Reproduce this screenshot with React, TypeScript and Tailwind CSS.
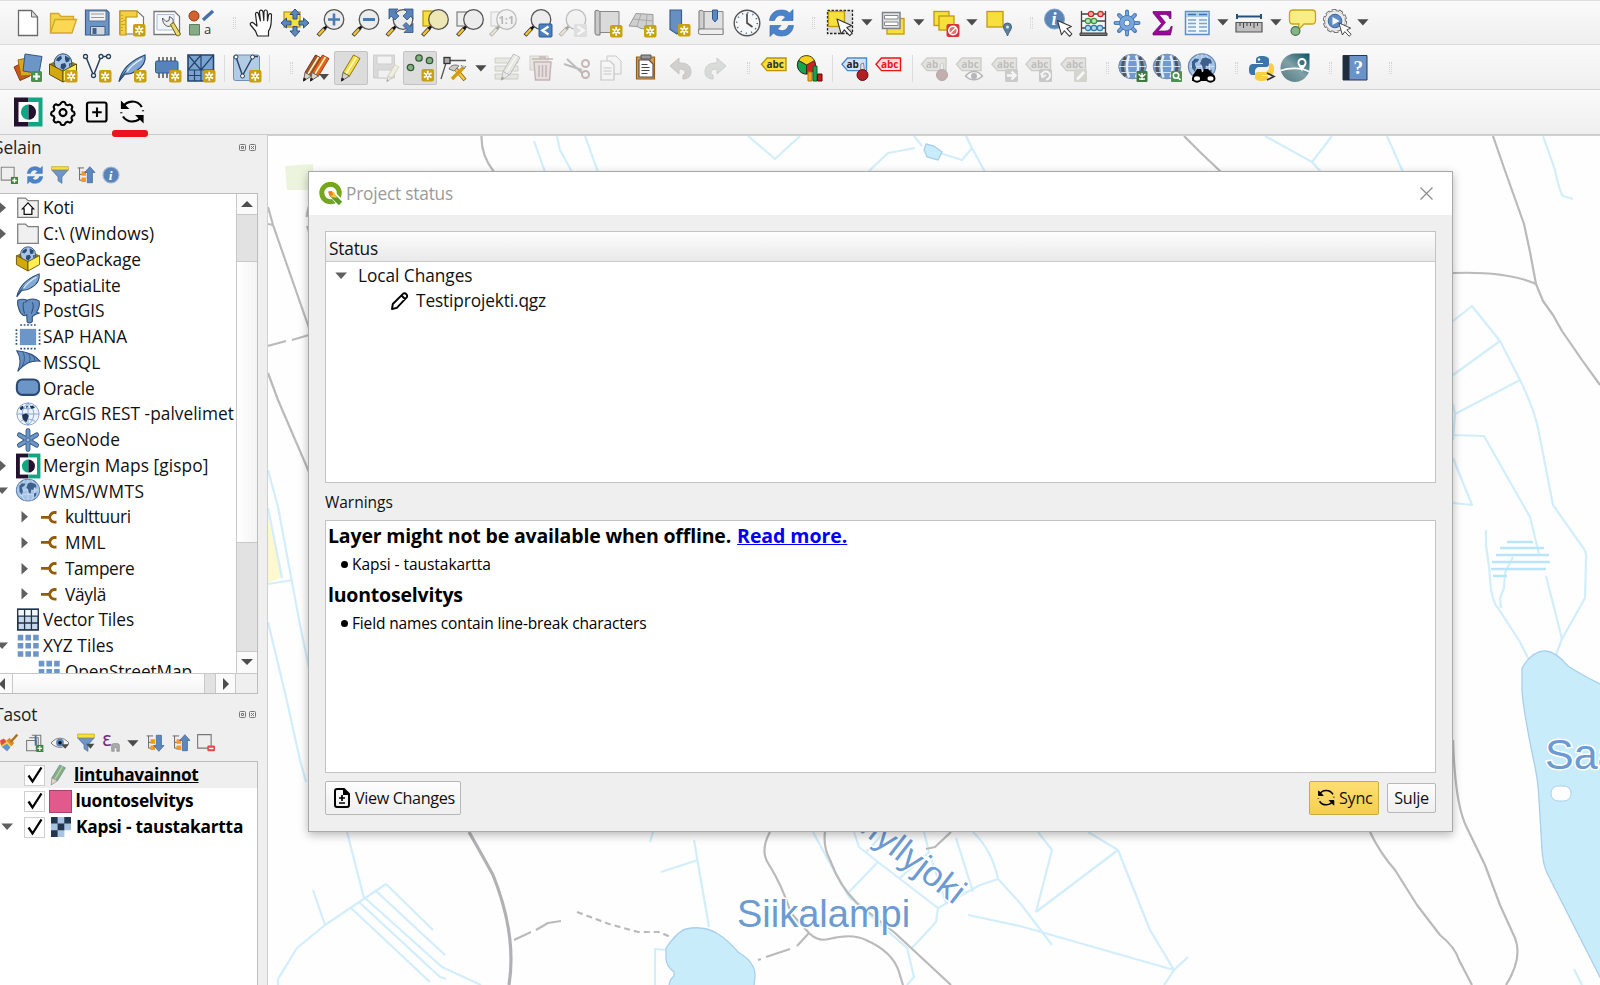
import type { ReactNode } from "react";

/* ---------- shared icon parts (28 x 28 grid) ---------- */

function Ico({ children, s = 28, faded = false }: { children: ReactNode; s?: number; faded?: boolean }) {
  return (
    <svg width={s} height={s} viewBox="0 0 28 28" fill="none" overflow="visible" className={faded ? "shrink-0 opacity-35 grayscale-[60%]" : "shrink-0"}>
      {children}
    </svg>
  );
}

const Star = ({ x = 16, y = 16 }: { x?: number; y?: number }) => (
  <g transform={`translate(${x} ${y})`}>
    <rect width="12.5" height="12.5" rx="2" fill="#c8a20c" />
    <path d="M6.25 1.8v8.9M2.4 4l7.7 4.5M10.1 4L2.4 8.5" stroke="#fff" strokeWidth="1.8" />
    <circle cx="6.25" cy="6.25" r="1" fill="#c8a20c" />
  </g>
);

const Lens = ({ cx = 18, fill = "#ececec" }: { cx?: number; fill?: string }) => (
  <g>
    <path d={`M${cx - 16} 26.5L${cx - 9} 19`} stroke="#3b3b3b" strokeWidth="4" />
    <path d={`M${cx - 15.4} 25.9L${cx - 9.4} 19.5`} stroke="#f4c331" strokeWidth="2.4" />
    <path d={`M${cx - 10} 20L${cx - 6} 16.2`} stroke="#111" strokeWidth="2.6" />
    <circle cx={cx} cy="10.5" r="9.8" fill={fill} stroke="#555" strokeWidth="1.3" />
  </g>
);

const Cursor = ({ x, y, k = 1 }: { x: number; y: number; k?: number }) => (
  <path transform={`translate(${x} ${y}) scale(${k})`} d="M0 0l4.2 15 3.1-4.2 5.4 5.8 2.5-2.4-5.4-5.6 4.8-2.2z" fill="#fff" stroke="#333" strokeWidth="1.1" strokeLinejoin="round" />
);

const ArrowDown = () => (
  <svg width="12" height="7" viewBox="0 0 12 7" className="shrink-0">
    <path d="M0.3 0.3h11.2L5.9 6.6z" fill="#4b4b4b" />
  </svg>
);

const Box = ({ x, y, w, h, f = "#f7df3c", st = "#c09a10" }: { x: number; y: number; w: number; h: number; f?: string; st?: string }) => (
  <rect x={x} y={y} width={w} height={h} fill={f} stroke={st} strokeWidth="1.3" />
);

const Globe = ({ cy = 13 }: { cy?: number }) => (
  <g transform={`translate(14 ${cy})`}>
    <ellipse rx="13.6" ry="12.6" fill="#a5c3e6" stroke="#6487b3" strokeWidth="1.2" />
    <path d="M-12 0H12M0-12V12M-10-7C-4-4 4-4 10-7M-10 7C-4 4 4 4 10 7M-4-12C-9-4-9 4-4 12M4-12C9-4 9 4 4 12" stroke="#d5e4f4" strokeWidth="0.8" />
    <path d="M-10-5l3-3 4 .5-1 2.500-3 1.500 0 2 1 2-1 5-3-4zM0-8l4-1 5 2 1 4-3 0-1 3-2-1-1 5-2-1-1-4-2-2zM7 4l3-1-1 4-2 1z" fill="#3d5f8c" />
  </g>
);

const StripedGlobe = () => (
  <g>
    <ellipse cx="14" cy="12.5" rx="13.8" ry="12.3" fill="#6f9bd1" stroke="#7d8da3" />
    <path d="M7 3C3 9 3 17 7 22M21 3c4 6 4 14 0 19" stroke="#555" strokeWidth="3" />
    <path d="M10.500 1.500C8 8 8 17 10.500 23.500M17.500 1.500C20 8 20 17 17.500 23.500" stroke="#e7eef7" strokeWidth="2.400" />
    <path d="M0.5 12.5h27M3 6.500h22M3 18.500h22" stroke="#dce8f5" strokeWidth="0.900" />
  </g>
);

const Refresh = () => (
  <g fill="#4a83c8" stroke="#2d62a5" strokeWidth="0.6">
    <path d="M2 11.500C3 4 8 1 14 1c4 0 6 1 8 3l3.500-3.500v11H14.500L18 8c-4-3-9-2-11 3.500z" />
    <path d="M26 16.500C25 24 20 27 14 27c-4 0-6-1-8-3l-3.500 3.500v-11h11L10 20c4 3 9 2 11-3.500z" />
  </g>
);

const Tag = ({ text, f, st, c, y = 3 }: { text: string; f: string; st: string; c: string; y?: number }) => (
  <g>
    <path d={`M2 ${y + 6.300}L7.500 ${y}H26.500V${y + 12.600}H7.500z`} fill={f} stroke={st} strokeWidth="1.400" />
    <text x={text === "ab" ? 6.500 : 7} y={y + 10} fontFamily="Open Sans, sans-serif" fontWeight="700" fontSize="10" fill={c}>
      {text}
    </text>
  </g>
);

const Feather = () => (
  <g>
    <path d="M1 27.500C3 18 9 8 27 1c1 7-2 12-9 16-3 2-7 3.500-11 3z" fill="#83aad6" stroke="#26476f" strokeWidth="1.200" />
    <path d="M1 27.500C5 19 13 10 24 4" stroke="#26476f" />
    <path d="M9 17.500C13 11 18 8 24 4.500" stroke="#dbe8f6" strokeWidth="1.600" />
  </g>
);

const GeoPkg = () => (
  <g>
    <path d="M0.500 10L14 3l13.500 7L14 18z" fill="#8f7612" />
    <circle cx="14" cy="8.500" r="8.700" fill="#a9c6e6" stroke="#2e4d76" />
    <path d="M8 4l4-2.500 1 3-3 3-3-1zM16 1.500l5 3-1 3-3 1-1-3zM12 10l4-1 1.500 3-3 4-3-2zM20 9.500l2-.5-2 5z" fill="#2b4c76" />
    <path d="M0.500 10L14 17v11L0.500 20.500z" fill="#d2a90a" stroke="#5d4b06" />
    <path d="M27.500 10L14 17v11l13.500-7.500z" fill="#fff04f" stroke="#5d4b06" />
  </g>
);

const MerginLogo = () => (
  <g>
    <path d="M0-.5h14.500v29H0z" fill="#23112f" />
    <path d="M14.500-.5h14v29h-14z" fill="#11a683" />
    <path d="M4.500 4h20v20h-20z" fill="#fff" />
    <path d="M14.500 6.500a7.600 7.600 0 000 15.200z" fill="#11a683" />
    <path d="M14.500 6.500a7.600 7.600 0 010 15.200z" fill="#23112f" />
  </g>
);

const Pencil = ({ f = "#f2dc4a", st = "#8c7a12" }: { f?: string; st?: string }) => (
  <g strokeLinejoin="round">
    <path d="M6 18.500L16.500 1l6.500 3.500-10.500 17.500z" fill={f} stroke={st} />
    <path d="M9 20L19.500 3" stroke="#fff8b8" strokeWidth="1.600" />
    <path d="M6 18.500L4.500 27l8-5z" fill="#d9d3c3" stroke="#666" />
    <path d="M4.500 27l.5-3 2 1.300z" fill="#222" stroke="#222" />
  </g>
);

const Bars = ({ children }: { children?: ReactNode }) => (
  <g>
    <path d="M2 4h23v5H2zM2 12h23v5H2zM2 20h23v5H2z" fill="#d2d2a8" stroke="#8a8a6a" />
    {children}
  </g>
);

const SyncMark = () => (
  <g stroke="#000" strokeWidth="2.200" fill="none">
    <path d="M4.500 9.500A11 11 0 0123.800 9M24 17.500A11 11 0 015 18.500" />
    <path d="M3.500 4v6.500h6.500zM25 24v-6.500h-6.500z" fill="#000" strokeWidth="1.200" />
    <path d="M3.300 14.200v1M25 12.200v1" />
  </g>
);

/* ---------- main toolbars ---------- */

const row1a: ReactNode[] = [
  <Ico><path d="M4.500 1.500h13l6 6.500v18.500h-19z" fill="#fff" stroke="#6b6b6b" strokeWidth="1.300" /><path d="M17.500 1.500V8h6z" fill="#ddd" stroke="#6b6b6b" /></Ico>,
  <Ico><path d="M1.500 24V4.500h8l2.500 3h12.500V11" fill="#f5d34b" stroke="#d3a62c" strokeWidth="1.300" /><path d="M1.500 24L6 10.500h21.500L23 24z" fill="#fbd854" stroke="#d3a62c" strokeWidth="1.300" /></Ico>,
  <Ico><path d="M2.500 1h21l2.500 2.500V26H2.500z" fill="#6c94c4" stroke="#40618c" strokeWidth="1.200" /><path d="M6 2h17v10H6z" fill="#f1f1f1" stroke="#57779f" /><path d="M8 5h13M8 8.500h13" stroke="#999" strokeWidth="1.200" /><path d="M7.500 17.500H22V26H7.500z" fill="#d3d8de" stroke="#40618c" /><path d="M9.500 19h4v6h-4z" fill="#40618c" /></Ico>,
  <Ico><path d="M2 2h17l6.500 6v17H2z" fill="#fff" stroke="#777" strokeWidth="1.200" /><path d="M2 2h17v6H8v18H2z" fill="#f4cf43" stroke="#c19611" strokeWidth="1.200" /><path d="M4 6v17M6 11v1M6 15v1" stroke="#a37c00" strokeDasharray="1 2" /><Star x={15} y={15} /></Ico>,
  <Ico><path d="M1 2.500h20.500l5 5v18H1z" fill="#fff" stroke="#777" strokeWidth="1.300" /><path d="M4 5.500h17V21H4z" fill="#f3f6fb" stroke="#a9bcd6" /><path d="M9.500 9l3.500 3.500 3-1 .5-4 3 2c1.500 3 .5 6-2 7.500-3.500 1.500-8-1.500-8-8z" fill="#eee" stroke="#555" /><path d="M17.500 15.500l3-2 7 11.500c-1 2-2.500 2-4 1.500z" fill="#ead96c" stroke="#6b5b10" /></Ico>,
  <Ico><circle cx="7" cy="7" r="5" fill="#d2622f" stroke="#8f3c14" /><path d="M16 11L26 2" stroke="#4670a6" strokeWidth="3.400" /><path d="M2.500 15.500h10V26h-10z" fill="#86ab86" stroke="#5a7f5c" /><text x="17" y="25" fontFamily="Open Sans, sans-serif" fontSize="13" fill="#333">a</text></Ico>,
];

const row1b: ReactNode[] = [
  <Ico><g transform="translate(1.500 0)"><path d="M9 27l-2-5-5-6c-1-2 1.500-3.500 3-2l3.500 3L7 5c0-2 2.500-2.500 3 0l2 7-1-9c0-2.500 3-2.500 3.500 0l.8 8.500L15.500 2.500c.5-2 3-2 3.300 0L19 12l1-6c.5-2 3-1.700 3 0-.5 7 .5 12-3 16v5z" fill="#fff" stroke="#222" strokeWidth="1.200" strokeLinejoin="round" /></g></Ico>,
  <Ico><Box x={3} y={3} w={16} h={15} /><path d="M14 0l5 5.500h-3v4.500h-4V5.500H9zM14 27.500L9 22h3v-4.500h4V22h3zM0 14l5.500-5v3H10v4H5.500v3zM28 14l-5.500-5v3H18v4h4.500v3z" fill="#5d88be" stroke="#2e527f" /></Ico>,
  <Ico><Lens /><path d="M18 4.500v12M12 10.500h12" stroke="#4b7ab5" strokeWidth="2.600" /></Ico>,
  <Ico><Lens /><path d="M12 10.500h12" stroke="#4b7ab5" strokeWidth="3" /></Ico>,
  <Ico><Lens /><path d="M4 0h9l-3 3 4 4-4 4-4-4-2 3zM28 0h-9l3 3-4 4 4 4 4-4 2 3zM28 23.500h-9l3-3-4-4 3-3 4 4 3-3z" fill="#5883b9" stroke="#2e527f" strokeWidth=".8" /></Ico>,
  <Ico><Box x={3} y={2} w={14} h={15} /><Lens cx={18.500} fill="#efe6b5" /></Ico>,
  <Ico><Box x={2} y={3} w={14} h={14} f="#eee" st="#888" /><Lens cx={18.500} /></Ico>,
  <Ico faded><Box x={2} y={3} w={14} h={14} f="#eee" st="#999" /><Lens cx={17.500} /><text x="9.500" y="14.500" fontFamily="Open Sans, sans-serif" fontWeight="700" fontSize="11" fill="#444">1:1</text></Ico>,
  <Ico><Lens cx={17} /><rect x="15" y="15" width="13" height="13" rx="1" fill="#4b7fbd" stroke="#2f5b91" /><path d="M24.500 17.500l-6 4 6 4" stroke="#fff" strokeWidth="2.400" /></Ico>,
  <Ico faded><Lens cx={17} /><rect x="15" y="15" width="13" height="13" rx="1" fill="#bbb" /><path d="M18.500 17.500l6 4-6 4" stroke="#fff" strokeWidth="2.400" /></Ico>,
  <Ico><g transform="translate(1 0)"><path d="M5 2.500h20v21H5z" fill="#dadada" stroke="#888" /><path d="M1 2c3-1.500 5 0 5 2v22H3c-2 0-2-2-2-3z" fill="#c9c9c9" stroke="#777" /><Star /></g></Ico>,
  <Ico><path d="M1 17L8 4.500l17 1v15l-12-1-4-2z" fill="#cfcfcf" stroke="#999" /><path d="M5 10l20 2M13 5l-4 12M19 5l-1 14" stroke="#aaa" /><Star /></Ico>,
  <Ico><g transform="translate(2 0)"><path d="M5 1h11.500v20l-4.500 4L5 20.500z" fill="#6690c2" stroke="#3b5f8f" strokeWidth="1.200" /><Star x={13} y={15} /></g></Ico>,
  <Ico><path d="M6 2.500h20v23H3" fill="#e0e0e0" stroke="#888" /><path d="M2 2c3-1.500 5 0 5 2v16H3c-2 0-2 2-1 5z" fill="#cfcfcf" stroke="#777" /><path d="M3 20h23v5.500H3c-2-1-2-4.500 0-5.500z" fill="#eee" stroke="#888" /><path d="M15.500 1h5v9l-2.500 3-2.500-3z" fill="#5d88be" stroke="#34588a" /></Ico>,
  <Ico><g transform="translate(1 0)"><circle cx="14" cy="14" r="12.800" fill="#f6f8fa" stroke="#555" strokeWidth="1.400" /><circle cx="14" cy="14" r="10.300" stroke="#4a6f9e" strokeWidth="1.600" strokeDasharray="1.200 4.190" /><path d="M14 4.500V14l5.500 4" stroke="#444" strokeWidth="1.600" /></g></Ico>,
  <Ico><g transform="translate(1.500 0)"><Refresh /></g></Ico>,
];

type Item = { icon: ReactNode; arrow?: boolean; pressed?: boolean };

const row1c: Item[] = [
  { icon: <Ico><path d="M1.500 1.500h25v23h-25z" fill="#ddd" stroke="#222" strokeDasharray="2.500 1.500" strokeWidth="1.300" /><Box x={2.500} y={2.500} w={16} h={15} /><Cursor x={11} y={10} /></Ico>, arrow: true },
  { icon: <Ico><Box x={8} y={9.500} w={17} h={15.500} /><path d="M3.500 3.500h17.500v16H3.500z" fill="#e1e3e6" stroke="#7d838a" strokeWidth="1.500" /><path d="M5.500 6.500h13.500v3.500H5.500zM5.500 13h13.500v3.500H5.500z" fill="#fff" stroke="#888" /></Ico>, arrow: true },
  { icon: <Ico><Box x={2} y={2.500} w={15} h={14} /><Box x={7} y={7} w={15} h={14} /><rect x="14.500" y="15" width="13" height="13" rx="2" fill="#d8343b" /><circle cx="21" cy="21.500" r="4.300" fill="#e96b6b" stroke="#fff" strokeWidth="1.500" /><path d="M18 24.500l6-6" stroke="#fff" strokeWidth="1.500" /></Ico>, arrow: true },
  { icon: <Ico><g transform="translate(1 0)"><Box x={2} y={2.500} w={16} h={15.500} /><path d="M22.500 27c-1-4-4-6-4-9a4 4 0 018 0c0 3-3 5-4 9z" fill="#5e7f9c" stroke="#43627e" /><circle cx="22.500" cy="18" r="1.500" fill="#dfe8f0" /></g></Ico> },
];

const row1d: Item[] = [
  { icon: <Ico><circle cx="10.500" cy="10" r="10" fill="#5a83b8" stroke="#86a3c8" /><text x="7.500" y="16" fontFamily="Liberation Serif, serif" fontStyle="italic" fontWeight="700" fontSize="18" fill="#fff">i</text><Cursor x={13.500} y={11.500} k={0.950} /></Ico> },
  { icon: <Ico><path d="M2.500 2v22M26.500 2v22M2.500 5h24M2.500 12h24M2.500 19h24" stroke="#444" strokeWidth="1.300" /><g strokeWidth="1.200"><g fill="#f6a7a7" stroke="#c22"><circle cx="12" cy="5" r="2.700" /><circle cx="21.500" cy="5" r="2.700" /></g><g fill="#b6e3b0" stroke="#3b9440"><circle cx="9" cy="12" r="2.700" /><circle cx="15" cy="12" r="2.700" /></g><g fill="#b4d6ee" stroke="#2f7caa"><circle cx="9" cy="19" r="2.700" /><circle cx="15" cy="19" r="2.700" /><circle cx="21" cy="19" r="2.700" /></g></g><path d="M1 24h27v2.500H1z" fill="#777" stroke="#444" /></Ico> },
  { icon: <Ico><g stroke="#4a7cba" strokeWidth="4" strokeLinecap="round"><path d="M14 2.500v23M2.500 14h23M6 6l16 16M22 6L6 22" /></g><g stroke="#7aa6dc" strokeWidth="2.200" strokeLinecap="round"><path d="M14 3v22M3 14h22M6.500 6.500l15 15M21.500 6.500l-15 15" /></g><circle cx="14" cy="14" r="7.500" fill="#7aa6dc" stroke="#4a7cba" /><circle cx="14" cy="14" r="3" fill="#f5f5f5" stroke="#4a7cba" /></Ico> },
  { icon: <Ico><path d="M5 2.500h18v7h-1.500c-.5-3-2-4-5-4h-5.500l6.500 8-7.500 8.500h7c3.500 0 5-1.500 6-4.500h1.300l-1.800 8.500H5v-2l8.500-9.500L5 4z" fill="#a0009e" stroke="#5d1060" strokeWidth=".7" /></Ico> },
  { icon: <Ico><path d="M2.500 2.500h23.500v23H2.500z" fill="#eef5fb" stroke="#5e8ec4" strokeWidth="1.500" /><path d="M3 3h22.500v5H3z" fill="#aecbeb" /><path d="M5 5.500h8M16 5.500h8" stroke="#3f72b0" strokeWidth="1.500" /><path d="M5 11h8M16 11h8M5 14.500h8M16 14.500h8M5 18h8M16 18h8M5 22h8M16 22h8" stroke="#7ea3cb" strokeWidth="1.400" /></Ico>, arrow: true },
  { icon: <Ico><path d="M2 7.500h24M2 5v5M26 5v5" stroke="#28507c" strokeWidth="2" /><path d="M1 13.500h26v9.500H1z" fill="#bfbfbf" stroke="#555" strokeWidth="1.200" /><path d="M5 14v3M8.500 14v5M12 14v3M15.500 14v3M19 14v5M22.500 14v3" stroke="#444" /></Ico>, arrow: true },
  { icon: <Ico><path d="M5 1h19c2.500 0 3.500 1.500 3.500 3.500v7c0 2.500-1.500 3.500-3.500 3.500h-8l-6 6 1-6H5c-2.500 0-3.500-1-3.500-3.500v-7C1.500 2 3 1 5 1z" fill="#f9ee86" stroke="#c7a616" strokeWidth="1.300" /><circle cx="7.500" cy="22" r="4.400" fill="#86b586" stroke="#4d6e4d" strokeWidth="1.200" /></Ico> },
  { icon: <Ico><circle cx="12" cy="12" r="10.600" stroke="#555" strokeWidth="3" strokeDasharray="4.300 2.360" /><circle cx="12" cy="12" r="10.500" fill="#ededed" stroke="#666" strokeWidth=".9" /><circle cx="12" cy="12" r="10.600" stroke="#ededed" strokeWidth="1.400" strokeDasharray="3.300 3.360" strokeDashoffset="-0.500" /><circle cx="12" cy="12" r="6.800" fill="#5e8bc2" stroke="#3c6496" /><path d="M9.500 8l7 4-7 4z" fill="#fff" /><Cursor x={16} y={14} k={0.800} /></Ico>, arrow: true },
];

const row2a: ReactNode[] = [
  <Ico><path d="M0 13l10-5 6 14-10 4.500z" fill="#c4571c" stroke="#863a10" /><path d="M4 6l13-3 2 18-12 1z" fill="#dba621" stroke="#97700b" /><path d="M11 0l17 2.500-3 17L9 17z" fill="#6c96c8" stroke="#335781" /><rect x="17" y="17" width="11" height="11" rx="1.500" fill="#4b9150" /><path d="M22.500 19v7M19 22.500h7" stroke="#fff" strokeWidth="2.200" /></Ico>,
  <Ico><GeoPkg /><Star /></Ico>,
  <Ico><path d="M3 3l7.500 18.500L18 2.500h7" stroke="#28415e" strokeWidth="1.500" /><g fill="#fff" stroke="#28415e" strokeWidth="1.300"><circle cx="2.500" cy="2.500" r="2" /><circle cx="10.500" cy="21.500" r="2" /><circle cx="18" cy="2.500" r="2" /><circle cx="25.500" cy="2.500" r="2" /></g><Star /></Ico>,
  <Ico><Feather /><Star /></Ico>,
  <Ico><path d="M6 3v21M10 3v21M14 3v21M18 3v21M22 3v21" stroke="#444" strokeWidth="1.400" /><rect x="2.500" y="7" width="22.500" height="12" rx="1.500" fill="#5683bb" stroke="#345b8d" /><Star /></Ico>,
  <Ico><path d="M1 1h25.500v26H1z" fill="#7ba3d1" stroke="#24446c" strokeWidth="1.600" /><path d="M14 1v26M1 16h25.500M1 1l13 15M14 1L1 16M26.500 1L14 16M7.500 16v11M1 21.500h13" stroke="#24446c" strokeWidth="1.200" /><Star /></Ico>,
];
const row2b: ReactNode[] = [
  <Ico><rect x=".5" y="1" width="26" height="25.500" rx="2" fill="#b3cce6" stroke="#6d8eb5" /><path d="M3 3l6.500 18.500L20 2.500h5" stroke="#28415e" strokeWidth="1.400" /><g fill="#fff" stroke="#28415e"><circle cx="3" cy="3" r="2" /><circle cx="9.500" cy="22" r="2" /><circle cx="19.500" cy="3" r="2" /></g><Star /></Ico>,
];
const row2c: Item[] = [
  { icon: <Ico><g transform="translate(-3 0)"><Pencil f="#a2522d" st="#72371b" /></g><g transform="translate(4 0)"><Pencil f="#e56220" st="#9c4012" /></g><path d="M17 20h10l-5 6z" fill="#4b4b4b" /></Ico> },
  { icon: <Ico><Pencil /></Ico>, pressed: true },
  { icon: <Ico faded><path d="M2.500 1h21V24h-21z" fill="#aaa" stroke="#888" /><path d="M6 2h15v8H6zM7 16h13v8H7z" fill="#eee" stroke="#888" /><g transform="translate(13 10) scale(.65)"><Pencil /></g></Ico> },
  { icon: <Ico><g fill="#82b27f" stroke="#37593a" strokeWidth="1.300"><circle cx="13" cy="4" r="3.200" /><circle cx="23.500" cy="6.500" r="3.200" /><circle cx="4.500" cy="13.500" r="3.200" /></g><Star x={15.500} y={15} /></Ico>, pressed: true },
  { icon: <Ico><path d="M6 6.500h19M5 9L0 25" stroke="#555" strokeWidth="1.300" /><rect x="3" y="3.500" width="6" height="6" fill="#aaa" stroke="#333" strokeWidth="1.300" /><path d="M13 13L24 26" stroke="#8a6508" strokeWidth="4" /><path d="M14 14.500l9.500 11" stroke="#f6cc3b" strokeWidth="2.600" /><path d="M22 14L11 25" stroke="#d59b12" strokeWidth="3.400" /><path d="M8 15c2-4 6-5 10-3l-5 5zM20 11l3 4 2-3" fill="#ccc" stroke="#777" /></Ico>, arrow: true },
  { icon: <Ico faded><Bars><g transform="translate(4 -1)"><Pencil f="#ccc" st="#555" /></g></Bars></Ico> },
  { icon: <Ico faded><path d="M2 2h18v14H2z" fill="#d2d2a8" stroke="#8a8a6a" /><path d="M4 5h21M12 5V3h5v2M6 8h17l-1.500 18h-14z" fill="#e7b5b5" stroke="#a33" strokeWidth="1.500" /><path d="M11 11v12M14.500 11v12M18 11v12" stroke="#a33" strokeWidth="1.500" /></Ico> },
  { icon: <Ico faded><path d="M1 10l18 6M4 5l15 14" stroke="#555" strokeWidth="2" /><circle cx="22.500" cy="9.500" r="3.500" stroke="#a33" strokeWidth="2" /><circle cx="22.500" cy="20.500" r="3.500" stroke="#a33" strokeWidth="2" /></Ico> },
  { icon: <Ico faded><path d="M10 2h9l5 5v13H10z" fill="#f2f2f2" stroke="#777" /><path d="M4 7h9l4 4v15H4z" fill="#f8f8f8" stroke="#777" strokeWidth="1.200" /><path d="M6.500 14h8M6.500 17h8M6.500 20h8" stroke="#777" /></Ico> },
  { icon: <Ico><path d="M4.500 3h18v22h-18z" fill="#d79a4e" stroke="#95601c" strokeWidth="1.200" /><path d="M9 1h10v4H9z" fill="#999" stroke="#555" /><path d="M7 6h10l4 4v13H7z" fill="#fff" stroke="#555" strokeWidth="1.200" /><path d="M9.500 10.500h6M9.500 13.500h8M9.500 16.500h8M9.500 19.500h6" stroke="#444" /></Ico> },
  { icon: <Ico faded><g transform="translate(2 1)"><path d="M1 11l9-8v5c9-.5 12 4 12 9 0 4-3 7-8 7v-4c3-1 3.500-6-4-6v5z" fill="#9b8a84" stroke="#7b6a64" /></g></Ico> },
  { icon: <Ico faded><g transform="translate(0 1)"><path d="M25 11l-9-8v5c-9-.5-12 4-12 9 0 4 3 7 8 7v-4c-3-1-3.500-6 4-6v5z" fill="#a5b0a5" stroke="#7b8a80" /></g></Ico> },
];
const row2d: ReactNode[] = [
  <Ico><g transform="translate(-1.500 0)"><Tag text="abc" f="#f6e03e" st="#b9930b" c="#333" y={4} /></g></Ico>,
  <Ico><g transform="translate(1 1)"><circle cx="10.500" cy="10" r="9" fill="#d2201b" stroke="#222" /><path d="M10.500 10L2.500 5.500a9 9 0 0116 0z" fill="#f7d21c" stroke="#222" strokeWidth=".8" /><path d="M10.500 10L2.500 5.500A9 9 0 0010.500 19z" fill="#18a34d" stroke="#222" strokeWidth=".8" /><path d="M12 17h4v9h-4z" fill="#f5a91b" stroke="#b37406" /><path d="M17 11h4v15h-4z" fill="#18a34d" stroke="#06612a" /><path d="M21.500 19h4.500v7h-4.500z" fill="#c11a1a" stroke="#700" /></g></Ico>,
];
const Pin = () => (
  <g><path d="M21 10l2.500-1 1 8h-4z" fill="#e5e5e5" stroke="#888" /><circle cx="22.500" cy="21" r="5.500" fill="#b01f24" stroke="#6d0d10" /></g>
);
const row2e: ReactNode[] = [
  <Ico><g transform="translate(-1 0)"><Tag text="ab" f="#cfe3fa" st="#4a8ad4" c="#222" y={4} /><Pin /></g></Ico>,
  <Ico><g transform="translate(-2 0)"><Tag text="abc" f="#ffdede" st="#ea1616" c="#ea1616" y={4} /></g></Ico>,
];
const grayTag = (t: string) => <Tag text={t} f="#c5c3a6" st="#86846e" c="#555" y={4} />;
const row2f: ReactNode[] = [
  <Ico faded><g transform="translate(-1.500 0)">{grayTag("ab")}<Pin /></g></Ico>,
  <Ico faded><g transform="translate(-1.500 0)">{grayTag("abc")}<path d="M11 22c5-6 12-6 17 0-5 5-12 5-17 0z" fill="#fff" stroke="#444" strokeWidth="1.400" /><circle cx="19.500" cy="22" r="3" fill="#446" /></g></Ico>,
  <Ico faded><g transform="translate(-1 0)">{grayTag("abc")}<rect x="15" y="15" width="13" height="13" rx="1.500" fill="#7a8a7e" /><path d="M17 21.500h8M21.500 17.500l4 4-4 4" stroke="#fff" strokeWidth="2.400" /></g></Ico>,
  <Ico faded><g transform="translate(-1 0)">{grayTag("abc")}<rect x="15" y="15" width="13" height="13" rx="1.500" fill="#7a7a7a" /><path d="M18 22a4 4 0 114 3.500M17 19l1.500 4 3.500-2" stroke="#fff" strokeWidth="2" /></g></Ico>,
  <Ico faded><g transform="translate(-1 0)">{grayTag("abc")}<rect x="15" y="15" width="13" height="13" rx="1.500" fill="#a29f7c" /><path d="M18 25.500l7-7.500" stroke="#fff" strokeWidth="2.800" /></g></Ico>,
];
const row2g: ReactNode[] = [
  <Ico><g transform="translate(-1.500 0)"><StripedGlobe /><rect x="18" y="17" width="11" height="11" rx="1" fill="#3c7a40" /><path d="M23.500 19v7M20 20l3.500 3 3.500-3M20.500 25h6" stroke="#fff" strokeWidth="1.400" /></g></Ico>,
  <Ico><g transform="translate(-1 0)"><StripedGlobe /><rect x="18" y="17" width="11" height="11" rx="1" fill="#4b9150" /><circle cx="23" cy="21.500" r="2.700" stroke="#fff" strokeWidth="1.600" /><path d="M25 23.500l2.500 2.500" stroke="#fff" strokeWidth="1.600" /></g></Ico>,
  <Ico><g transform="translate(-1 0)"><Globe cy={12.500} /><path d="M9 15h4l1 3h1l1-3h4l7 7-2 5H4l1-6z" fill="#000" /><g fill="#fff" stroke="#000" strokeWidth="2"><ellipse cx="9" cy="24.500" rx="4" ry="3.200" /><ellipse cx="22.500" cy="24.500" rx="4" ry="3.200" /></g></g></Ico>,
];
const row2h: ReactNode[] = [
  <Ico><path d="M13 2c-5 0-6 2-6 4v3h7v1H4c-3 0-4 2-4 6 0 3 1 5 4 5h2v-4c0-2 2-4 4-4h7c2 0 3-1 3-3V6c0-3-3-4-7-4z" fill="#3a75ab" /><circle cx="10" cy="5.500" r="1.200" fill="#fff" /><path d="M20 10v4c0 2-2 4-4 4H9c-2 0-3 1-3 3v3c0 2 3 3 7 3 4 0 6-1 6-3v-2h-6v-1h9c2 0 3-2 3-6s-1-5-3-6z" fill="#f9d03f" /><path d="M18 19l7 3.500-7 3.500" stroke="#333" strokeWidth="1.600" /></Ico>,
  <Ico><defs><linearGradient id="teal" x1="1" y1="0" x2="0.200" y2="1"><stop offset="0" stopColor="#0c5261" /><stop offset="0.550" stopColor="#7fa0a6" /><stop offset="1" stopColor="#5b7e86" /></linearGradient></defs><g transform="translate(-2 0)"><path d="M14 -0.500 H28.500 V13.500 C28.500 21.500 22 28 14 28 C6 28 -0.500 21.500 -0.500 13.500 C-0.500 6 6 -0.500 14 -0.500 z" fill="url(#teal)" /><path d="M0 16.500c8-3 20-3 28 1" stroke="#fff" strokeWidth="1.600" /><path d="M21 18c-1-4-4.500-6-4.500-9.500a4.500 4.500 0 019 0C25.500 12 22 14 21 18z" fill="#fff" /><circle cx="21" cy="8.500" r="2.600" fill="#3d717c" /></g></Ico>,
];
const row2i: ReactNode[] = [
  <Ico><g transform="translate(-2 0)"><path d="M2 1.500h24v24.500H2z" fill="#6a93c9" stroke="#26384f" /><path d="M2 1.500h6.500v24.500H2z" fill="#1f2c3e" /><text x="12.500" y="20" fontFamily="Liberation Serif, serif" fontSize="19" fontWeight="700" fill="#fff">?</text></g></Ico>,
];

const row3: ReactNode[] = [
  <Ico><MerginLogo /></Ico>,
  <Ico><path d="M12 3.500q2-1.500 4 0l.7 2.200 2.200.9 2.400-1q2.200.6 2.600 2.800l-1 2.400.9 2 2 1.200q1 1.500 0 3.200l-2.200 1-.8 2.100 1 2.300q-.8 2.200-2.800 2.600l-2.300-1-2 .8-1.200 2.300q-2 1-3.800 0l-1-2.300-2.100-.8-2.300 1q-2-.6-2.700-2.700l1-2.300-.8-2-2.300-1q-1-1.800 0-3.400l2.200-1.200.9-2-1-2.300q.5-2 2.600-2.800l2.400 1 2-.9z" transform="translate(1.200 1.200) scale(.93)" stroke="#000" strokeWidth="2.200" strokeLinejoin="round" /><circle cx="14" cy="14.600" r="3.500" stroke="#000" strokeWidth="2.100" /></Ico>,
  <Ico><rect x="4" y="4.500" width="19.500" height="19" rx="2" stroke="#000" strokeWidth="2.200" /><path d="M14 9.500v9.500M9.200 14.200h9.500" stroke="#000" strokeWidth="2.100" /></Ico>,
  <Ico><SyncMark /></Ico>,
];

function Handle() {
  return (
    <div className="flex h-full w-[25px] shrink-0 items-center pl-[14.500px]">
      <div className="h-[12px] w-[3px] border-x border-dotted border-[#d3d3d3]" />
    </div>
  );
}
function Sep() {
  return (
    <div className="flex h-full w-[11px] shrink-0 items-center pl-[5px]">
      <div className="h-[27px] w-px bg-[#dcdcdc]" />
    </div>
  );
}
function Group({ items }: { items: (ReactNode | Item)[] }) {
  return (
    <div className="flex h-full shrink-0 items-center">
      {items.map((raw, i) => {
        const it: Item = raw && typeof raw === "object" && "icon" in (raw as object) ? (raw as Item) : { icon: raw as ReactNode };
        return (
          <button key={i} className={it.arrow ? "flex w-[52.8px] items-center gap-[6.500px] pl-[3.3px]" : "flex w-[34.65px] justify-center"}>
            {it.pressed ? (
              <span className="flex size-[34px] shrink-0 items-center justify-center rounded-[2px] border border-[#c3c3c3] bg-[#dcdcdc]">{it.icon}</span>
            ) : (
              it.icon
            )}
            {it.arrow && <ArrowDown />}
          </button>
        );
      })}
    </div>
  );
}

function Toolbars() {
  return (
    <header className="flex h-[135px] shrink-0 flex-col">
      <div className="flex h-[45px] items-center border-t border-b border-t-[#dedede] border-b-[#dadada] bg-linear-to-b from-[#fafafa] to-[#efefef]">
        <div className="w-[10.7px] shrink-0" />
        <Group items={row1a} />
        <Handle />
        <Group items={row1b} />
        <Handle />
        <Group items={row1c} />
        <Handle />
        <Group items={row1d} />
      </div>
      <div className="flex h-[45px] items-center border-b border-[#d3d3d3] bg-linear-to-b from-[#fafafa] to-[#efefef] pt-[2px]">
        <div className="w-[10.7px] shrink-0" />
        <Group items={row2a} />
        <Sep />
        <Group items={row2b} />
        <Sep />
        <Handle />
        <div className="-ml-[1.500px]" />
        <Group items={row2c} />
        <Handle />
        <Group items={row2d} />
        <Sep />
        <Group items={row2e} />
        <Sep />
        <Group items={row2f} />
        <Handle />
        <Group items={row2g} />
        <Handle />
        <Group items={row2h} />
        <Handle />
        <Group items={row2i} />
        <Handle />
      </div>
      <div className="relative flex h-[45px] items-center border-b border-[#cbcbcb] bg-linear-to-b from-[#fafafa] to-[#efefef]">
        <div className="w-[10.7px] shrink-0" />
        <Group items={row3} />
        <div className="absolute top-[40px] left-[112px] z-10 h-[7px] w-[36px] rounded-[3px] bg-[#e9151b]" />
      </div>
    </header>
  );
}

/* ---------- side docks ---------- */

const PlusBox = () => (
  <Ico s={18}><path d="M2 2h20v20H2z" stroke="#888" strokeWidth="1.700" fill="#eee" /><rect x="17" y="17" width="11" height="11" fill="#3e8544" /><path d="M22.500 19v7M19 22.500h7" stroke="#fff" strokeWidth="2.200" /></Ico>
);
const MinusBox = () => (
  <Ico s={18}><path d="M1 1h21v21H1z" stroke="#777" strokeWidth="1.700" fill="#eee" /><rect x="16" y="18" width="12" height="9" rx="2" fill="#e5484d" /><path d="M18.500 22.500h7" stroke="#fff" strokeWidth="2.200" /></Ico>
);
const Funnel = () => (
  <Ico s={18}><path d="M1 6h26L17 17v10l-6-4v-6z" fill="#6c96c8" stroke="#3c6496" /><path d="M1 1h26v5H1z" fill="#f7df3c" stroke="#b9a010" /></Ico>
);
const TreeArrow = ({ up }: { up?: boolean }) => (
  <Ico s={18}><path d="M1 3h10M4 3v19h7M4 13h7" stroke="#666" strokeWidth="1.500" /><path d="M7 8h7v7H7zM7 18h7v7H7z" fill="#f79a1c" />{up ? <path d="M20 1l8 9h-4v16h-8V10h-4z" fill="#5d88be" stroke="#34588a" /> : <path d="M20 27l8-9h-4V2h-8v16h-4z" fill="#5d88be" stroke="#34588a" />}</Ico>
);
const Info = () => (
  <Ico s={18}><circle cx="14" cy="14" r="12.500" fill="#5a83b8" stroke="#a5b8d1" strokeWidth="1.800" /><text x="10.500" y="21.500" fontFamily="Liberation Serif, serif" fontStyle="italic" fontWeight="700" fontSize="21" fill="#fff">i</text></Ico>
);
const Folder = ({ home }: { home?: boolean }) => (
  <Ico s={24}><path d="M2 25V2.500h9l3 3h12V25z" fill="#f0f0f0" stroke="#808080" strokeWidth="1.500" />{home && <path d="M7.500 15l6.500-7 6.500 7h-2v6.500h-9V15z" stroke="#111" strokeWidth="1.500" fill="#fff" />}</Ico>
);
const Elephant = () => (
  <Ico s={24}><path d="M2 1.500c5-2 9-1 11 0 5-2 10-2 14 1 1 5-1 10-3 13l3 1-5 2-3 2v6c-2 2-5 2-6 0l-.5-8-3 1C5 18 1 9 2 1.500z" fill="#6690c2" stroke="#2f4f7c" strokeWidth="1.300" /><path d="M9 4c-2 5 0 9 1 13M19 4c3 5 0 8-1 13M13 2c-1 1-2 2-3 2" stroke="#2f4f7c" strokeWidth="1.200" /></Ico>
);
const Hana = () => (
  <Ico s={24}><path d="M4.500 4.500h19v19h-19z" fill="#6c96c8" /><path d="M5 0h18M5 27.500h18M.5 5v18M27.500 5v18" stroke="#2f4f7c" strokeWidth="2" strokeDasharray="2 2" /></Ico>
);
const Mssql = () => (
  <Ico s={24}><path d="M1 1c12 1 20 4 27 12-11-1-18 3-26 12 4-9 4-16-1-24z" fill="#6690c2" stroke="#2f4f7c" strokeWidth="1.200" /><path d="M8 2c3 6 2 13-1 17M14 3.500c3 4 3 8 1 11.500M20 6.500c2 3 2 5 1 7" stroke="#2f4f7c" /></Ico>
);
const OracleIcon = () => (
  <Ico s={24}><rect x="1" y="4" width="26" height="18" rx="6.500" fill="#6c96c8" stroke="#2b4a73" strokeWidth="2.400" /></Ico>
);
const Arc = () => (
  <Ico s={24}><circle cx="14" cy="14" r="13" fill="#eef3fa" stroke="#7f9cc4" /><path d="M14 1v26M1 14h26M5 5c5 4 13 4 18 0M5 23c5-4 13-4 18 0M14 1c-9 8-9 18 0 26 9-8 9-18 0-26" stroke="#7b9fd0" /><path d="M4 7l4-3 1 3-3 3zM7 15l5-2 3 3-3 8-4-4zM16 5l4-1 2 3-4 1zM12 4l2 1-2 3z" fill="#1f3553" /></Ico>
);
const Flower = () => (
  <Ico s={24}><g stroke="#2f4f7c" strokeWidth="5.600" strokeLinecap="round"><path d="M14 3v22M4 8l20 12M24 8L4 20" /></g><g stroke="#6c96c8" strokeWidth="3.800" strokeLinecap="round"><path d="M14 3v22M4 8l20 12M24 8L4 20" /></g><circle cx="14" cy="14" r="2.500" fill="#9bb9de" stroke="#2f4f7c" /></Ico>
);
const Conn = () => (
  <svg width="16" height="13" viewBox="0 0 16 13" className="shrink-0"><path d="M0 6.300h8.500M15.500 1.500h-2.200C10.500 1.800 9.200 3.500 8.500 6.300c.7 2.800 2 4.500 4.800 4.800h2.200" fill="none" stroke="#945c08" strokeWidth="2.800" /></svg>
);
const Grid = () => (
  <Ico s={24}><path d="M2 1.500h24v24H2z" fill="#c7d8ea" stroke="#1f3248" strokeWidth="1.700" /><path d="M2 1.500h24v8H2z" fill="#f5f8fb" /><path d="M10 1.500v24M18 1.500v24M2 9.500h24M2 17.500h24M2 1.500h24v24H2z" stroke="#1f3248" strokeWidth="1.500" /></Ico>
);
const Nine = () => (
  <Ico s={24}><path d="M2 1h6.500v6.500H2zM11 1h6.500v6.500H11zM20 1h6.500v6.500H20zM2 10.500h6.500V17H2zM11 10.500h6.500V17H11zM20 10.500h6.500V17H20zM2 20h6.500v6.500H2zM11 20h6.500v6.500H11zM20 20h6.500v6.500H20z" fill="#6c96c8" /></Ico>
);

type Node = { label: string; icon: ReactNode; tw?: "r" | "d"; child?: boolean; track: string };
const nodes: Node[] = [
  { label: "Koti", icon: <Folder home />, tw: "r", track: "tracking-[-0.1px]" },
  { label: "C:\\ (Windows)", icon: <Folder />, tw: "r", track: "tracking-[0.100px]" },
  { label: "GeoPackage", icon: <Ico s={24}><GeoPkg /></Ico>, track: "tracking-[-0.080px]" },
  { label: "SpatiaLite", icon: <Ico s={24}><Feather /></Ico>, track: "tracking-[-0.150px]" },
  { label: "PostGIS", icon: <Elephant />, track: "tracking-[-0.1px]" },
  { label: "SAP HANA", icon: <Hana />, track: "tracking-[0.200px]" },
  { label: "MSSQL", icon: <Mssql />, track: "tracking-[0.050px]" },
  { label: "Oracle", icon: <OracleIcon />, track: "tracking-[-0.150px]" },
  { label: "ArcGIS REST -palvelimet", icon: <Arc />, track: "tracking-[0.020px]" },
  { label: "GeoNode", icon: <Flower />, track: "tracking-[0.100px]" },
  { label: "Mergin Maps [gispo]", icon: <Ico s={24}><MerginLogo /></Ico>, tw: "r", track: "tracking-[0.080px]" },
  { label: "WMS/WMTS", icon: <Ico s={24}><Globe /></Ico>, tw: "d", track: "tracking-[0.450px]" },
  { label: "kulttuuri", icon: <Conn />, tw: "r", child: true, track: "tracking-[-0.370px]" },
  { label: "MML", icon: <Conn />, tw: "r", child: true, track: "tracking-[0.200px]" },
  { label: "Tampere", icon: <Conn />, tw: "r", child: true, track: "tracking-[-0.400px]" },
  { label: "Väylä", icon: <Conn />, tw: "r", child: true, track: "tracking-[-0.300px]" },
  { label: "Vector Tiles", icon: <Grid />, track: "tracking-[-0.130px]" },
  { label: "XYZ Tiles", icon: <Nine />, tw: "d", track: "tracking-[0.080px]" },
  { label: "OpenStreetMap", icon: <Nine />, child: true, track: "tracking-[-0.100px]" },
];

const Twisty = ({ kind }: { kind?: "r" | "d" }) => (
  <svg width="12" height="12" viewBox="0 0 12 12" className="shrink-0">
    {kind === "r" && <path d="M3.500 0l6.500 5.700-6.500 5.700z" fill="#5f5f5f" />}
    {kind === "d" && <path d="M0.300 2.500h11.700L6.100 9z" fill="#5f5f5f" />}
  </svg>
);

function DockTitle({ text }: { text: string }) {
  return (
    <div className="flex h-[24px] shrink-0 items-center justify-between pr-[2px]">
      <span className="-ml-[6px] text-[17.3px] tracking-[-0.1px] text-[#222]">{text}</span>
      <svg width="17" height="7" viewBox="0 0 17 7" fill="none" stroke="#777" className="-mt-[2px] shrink-0">
        <rect x=".5" y=".5" width="6" height="6" rx="1" />
        <path d="M2.500 2.500h2v2h-2z" />
        <rect x="10.500" y=".5" width="6" height="6" rx="1" />
        <path d="M12 2l3 3M15 2l-3 3" />
      </svg>
    </div>
  );
}

const Tri = ({ d }: { d: string }) => (
  <svg width="12" height="12" viewBox="0 0 12 12"><path d={d} fill="#4d4d4d" /></svg>
);

function Sidebar() {
  return (
    <aside className="flex w-[267px] shrink-0 flex-col overflow-hidden bg-[#efefef] pr-[9px]">
      <div className="pt-px pb-[3px]"><DockTitle text="Selain" /></div>
      <div className="flex h-[24px] shrink-0 items-center gap-[7.500px]">
        <PlusBox /><Ico s={18}><Refresh /></Ico><Funnel /><TreeArrow up /><Info />
      </div>
      <div className="mt-[6px] flex h-[501px] shrink-0 flex-col border-t border-r border-b border-[#bdbdbd] bg-white">
        <div className="flex min-h-0 flex-1">
          <div className="min-w-0 flex-1 overflow-hidden pt-px">
            {nodes.map((n) => (
              <div key={n.label} className={n.child ? "flex h-[25.770px] items-center pl-[18px]" : "-ml-[4px] flex h-[25.770px] items-center"}>
                <Twisty kind={n.tw} />
                <span className={n.child ? "ml-[6px] flex w-[26px] shrink-0 justify-center" : "ml-[8px] flex w-[24px] shrink-0 justify-center"}>{n.icon}</span>
                <span className={`${n.track} ml-[3px] text-[17.300px] whitespace-nowrap text-[#111]`}>{n.label}</span>
              </div>
            ))}
          </div>
          <div className="flex w-[21px] shrink-0 flex-col border-l border-[#c8c8c8] bg-[#e2e2e2]">
            <div className="flex h-[21px] items-center justify-center border-b border-[#c8c8c8] bg-[#fafafa]"><Tri d="M0 9h12L6 3z" /></div>
            <div className="h-[46px]" />
            <div className="h-[282px] border-y border-[#c8c8c8] bg-linear-to-r from-white to-[#f4f4f4]" />
            <div className="flex-1" />
            <div className="flex h-[22px] items-center justify-center border-t border-[#c8c8c8] bg-[#fafafa] pb-[2px]"><Tri d="M0 3h12L6 9z" /></div>
          </div>
        </div>
        <div className="flex h-[20px] shrink-0 border-t border-[#c8c8c8] bg-[#e2e2e2]">
          <div className="flex w-[13px] items-center border-r border-[#c8c8c8] bg-[#fafafa]"><span className="-ml-[4px]"><Tri d="M9 0v12L3 6z" /></span></div>
          <div className="w-[192px] border-r border-[#c8c8c8] bg-linear-to-b from-white to-[#f4f4f4]" />
          <div className="w-[10px]" />
          <div className="flex w-[21px] items-center justify-center border-x border-[#c8c8c8] bg-[#fafafa]"><Tri d="M3 0v12l6-6z" /></div>
          <div className="flex-1 bg-[#efefef]" />
        </div>
      </div>

      <div className="mt-[9px]"><DockTitle text="Tasot" /></div>
      <div className="mt-[3px] flex h-[26px] shrink-0 items-center gap-[7.500px]">
        <Ico s={18}><path d="M0 12l9-4 9 10-6 8C4 24 0 18 0 12z" fill="#f0cf4d" /><path d="M0 10l6-3 4 5-8 6z" fill="#e14b43" /><path d="M3 20l8-5 5 6-5 6z" fill="#5b93d3" /><path d="M10 10l8 9 4-5-7-8z" fill="#d98a2c" /><path d="M17 12L27 1" stroke="#b36f1d" strokeWidth="3.600" /></Ico>
        <Ico s={18}><path d="M1 10h15v16H1zM5 6h14v16M9 2h14v16" stroke="#777" strokeWidth="1.600" fill="none" /><path d="M15 2v16" stroke="#44709f" strokeWidth="3" /><rect x="16" y="17" width="11" height="11" fill="#3e8544" /><path d="M21.500 19v7M18 22.500h7" stroke="#fff" strokeWidth="2" /></Ico>
        <Ico s={18}><path d="M0 14C8 4 20 4 28 14c-8 9-20 9-28 0z" fill="#f2f2f2" stroke="#777" strokeWidth="1.500" /><circle cx="14" cy="13.500" r="6" fill="#5b84b8" /><circle cx="14" cy="13.500" r="2.800" fill="#111" /><path d="M16 16h12l-6 7z" fill="#4b4b4b" /></Ico>
        <Ico s={18}><path d="M1 6h26L17 17v10l-6-4v-6z" fill="#6c96c8" stroke="#3c6496" /><path d="M1 0h26v6H1z" fill="#f7df3c" stroke="#b9a010" /><path d="M14 15h13l-6 8z" fill="#4b4b4b" /></Ico>
        <Ico s={18}><text x="0" y="18" fontFamily="DejaVu Sans, sans-serif" fontSize="29" fill="#6d2f7c">ε</text><path d="M15 27V17c0-3 12-3 12 0v10h-4v-6h-4v6z" fill="#aaa" stroke="#888" /></Ico>
        <span className="-ml-[1px]"><ArrowDown /></span>
        <TreeArrow />
        <TreeArrow up />
        <MinusBox />
      </div>
      <div className="mt-[5px] flex flex-1 flex-col border-t border-r border-[#bdbdbd] bg-white text-[17.300px] font-bold text-black">
        <div className="flex h-[26px] items-center bg-[#efefef] pl-[24px]">
          <Check />
          <span className="flex w-[28px] justify-center"><Ico s={20}><path d="M4 18L15 0l8 4-11 18z" fill="#86ab86" stroke="#5f8f9c" /><path d="M8 20L19 2" stroke="#b9cf9e" strokeWidth="2" /><path d="M4 18L3 28l9-6z" fill="#e3d9c8" stroke="#888" /></Ico></span>
          <span className="ml-[1px] tracking-[-0.320px] underline">lintuhavainnot</span>
        </div>
        <div className="flex h-[26px] items-center pl-[24px]">
          <Check />
          <span className="ml-[4px] size-[23px] border border-[#a8436a] bg-[#e15a8b]" />
          <span className="ml-[3.500px] tracking-[-0.300px]">luontoselvitys</span>
        </div>
        <div className="flex h-[26px] items-center pl-px">
          <Twisty kind="d" />
          <span className="ml-[11px]"><Check /></span>
          <span className="flex w-[31px] justify-center">
            <svg width="20" height="20" viewBox="0 0 20 20"><path d="M0 0h20v13.300h-6.600V20H0z" fill="#a9c3e2" /><path d="M0 0h6.600v6.600H0zM13.300 0H20v6.600h-6.700zM6.600 6.600h6.700v6.700H6.600zM0 13.300h6.600V20H0z" fill="#22364d" /></svg>
          </span>
          <span className="tracking-[-0.220px] whitespace-nowrap">Kapsi - taustakartta</span>
        </div>
      </div>
    </aside>
  );
}

function Check() {
  return (
    <span className="flex size-[21px] shrink-0 items-center justify-center border border-[#cfcfcf] bg-white">
      <svg width="16" height="17" viewBox="0 0 16 17" fill="none"><path d="M1.500 8.500l4 6L14.500 0.500" stroke="#000" strokeWidth="2.300" /></svg>
    </span>
  );
}

/* ---------- map canvas ---------- */

const streams = [
  "M534 141L545 172", "M557 136L560 150L572 172", "M585 136L598 172",
  "M748 136L775 159L800 136", "M868 172L888 153L915 148", "M914 136L922 146", "M940 153L962 160L972 148L985 172", "M972 148L966 136",
  "M1265 136L1312 162L1332 136M1312 162L1321 172", "M1387 136L1403 172",
  "M1543 136L1555 170Q1560 193 1563 196L1573 199",
  "M1453 321L1472 306L1500 341L1520 380Q1535 410 1539 433L1553 505L1584 549Q1587 553 1586 560L1585 598L1562 639L1555 657",
  "M1453 375L1500 341M1455 414L1520 380M1453 404L1455 414L1453 440M1453 435L1484 436L1530 517L1539 554",
  "M1453 458L1472 505L1453 503", "M1486 530L1486 545L1489 567L1491 590Q1494 605 1498 608L1520 642L1529 660",
  "M1513 557L1505 573L1504 588L1500 598L1501 608", "M1546 576L1562 639",
  "M1574 969L1582 985",
  "M268 470L278 507L300 625L309 668", "M268 508L282 578M268 584L293 580", "M268 622L286 697L300 760L306 782",
  "M347 832L364 898", "M313 890L325 925", "M386 884L325 925L297 948L278 979V985", "M386 884L433 930",
  "M376 891L445 955", "M365 898L442 967L481 985", "M359 902L440 977L446 979", "M351 908L430 982",
  "M653 832L650 842", "M694 840L709 927M661 872L698 860", "M655 985V949L666 950",
  "M813 832L832 867L849 897L907 948L914 977L907 985", "M912 948L936 922L938 908L878 862L859 847L854 832",
  "M878 862L849 892M866 852L885 832", "M938 908L980 885L998 879Q992 850 973 832M998 879L1020 903L1052 945",
  "M900 878L929 852L924 832M929 852L946 903", "M956 838L973 892", "M968 915L1020 926L1174 970L1188 957",
  "M1088 832L1118 850L1150 930L1174 970L1164 985", "M1038 832L1052 850L1036 912", "M1036 912L1118 850",
];
const roads = [
  "M481.500 136Q481 155 494 172", "M1184 136L1200 152L1221 172",
  "M1493 136L1503 165L1524 224L1530 252L1536 284L1543 301L1553 315L1562 331L1582 360L1600 385",
  "M1453 273Q1507 271 1536 284",
  "M1453 740Q1455 805 1467 828L1485 865L1500 905L1515 938Q1523 958 1506 985",
  "M1370 832Q1380 853 1395 870L1417 905L1440 935Q1455 947 1459 960L1472 985",
  "M770 832Q760 850 768 863Q782 885 791 913L809 933Q818 942 829 939Q852 933 866 940Q893 952 899 972L903 985",
  "M825 832Q823 847 830 860Q840 887 857 903L895 933L951 985",
  "M951 832L935 847L926 849", "M268 207L273 225L309 328M268 224L273 225", "M268 373L278 400L309 472", "M308.500 207L306.500 217M307 226L309 232",
];

function MapCanvas() {
  return (
    <svg className="block h-full w-full" viewBox="268 136 1332 849" preserveAspectRatio="none" fill="none">
      <rect x="268" y="136" width="1332" height="849" fill="#fefefe" />
      <path d="M285 166L313 164V190L287 190z" fill="#edf4dd" />
      <path d="M268 517L282 577L268 583z" fill="#fdf8cd" />
      <g stroke="#d2eefb" strokeWidth="2.200" strokeLinejoin="round">
        {streams.map((d) => <path key={d} d={d} />)}
      </g>
      <path d="M1507 542h26M1500 548h44M1496 555h53M1492 562h58M1491 569h55M1493 576h14" stroke="#b7e6fa" strokeWidth="2.600" />
      <g stroke="#bababa" strokeWidth="2.200" strokeLinejoin="round">
        {roads.map((d) => <path key={d} d={d} />)}
        <path d="M469 832Q486 862 493 875Q517 935 509 985" stroke="#b1b1b4" strokeWidth="3.200" />
        <path d="M514 940L531 932M536 930L548 923L561 921M758 960L761 959M766 957L790 949M797 946L809 933M268 346L286 341M292 340L309 335" />
        <path d="M577 912L609 924L638 932L660 932L672 938" strokeDasharray="6 4" />
      </g>
      <g fill="#c9ecfb" stroke="#a9cfeb" strokeWidth="1.300">
        <path d="M1522 668Q1533 650 1546 651Q1556 652 1568 666Q1580 674 1602 685V981L1547 873Q1543 864 1542 850L1539 800Q1538 780 1535 767Q1523 710 1522 690z" />
        <path d="M674 972Q666 966 666 958V948Q678 931 686 929Q704 925 718 934Q728 940 738 952Q755 962 755 975L754 987H669Q669 980 674 976z" />
        <path d="M926 144L934 146L942 152L938 160L927 157L924 150z" />
      </g>
      <rect x="1551" y="786" width="20" height="15" rx="7" fill="#fff" stroke="#a9cfeb" />
      <g fontFamily="Liberation Sans, Arial, sans-serif" fill="#6c9bd2" stroke="#fff" strokeWidth="3" paintOrder="stroke">
        <text x="737" y="927" fontSize="38">Siikalampi</text>
        <text x="1545" y="769" fontSize="43">Saa</text>
        <text transform="translate(850 824) rotate(38)" fontSize="35">Myllyjoki</text>
      </g>
    </svg>
  );
}

/* ---------- dialog ---------- */

function Dialog() {
  return (
    <section className="absolute top-[35px] left-[40px] flex h-[661px] w-[1145px] flex-col border border-[#a9a9a9] bg-[#efefef] shadow-[0_3px_9px_rgba(0,0,0,0.28)]">
      <div className="flex h-[43px] shrink-0 items-center bg-white pr-[19px] pl-[10px]">
        <svg width="24" height="24" viewBox="0 0 24 24" fill="none">
          <circle cx="11.500" cy="11" r="8.700" stroke="#74a71f" strokeWidth="5" />
          <path d="M14 13l8 8.500" stroke="#fff" strokeWidth="7" />
          <path d="M12.500 12.500l9 9" stroke="#5f9a28" strokeWidth="4.600" />
          <path d="M10 9l5 1 3 6-6-1z" fill="#f2c53a" />
          <path d="M9 9.500l4-.5 1 4-3.500 1z" fill="#ee7d1c" />
        </svg>
        <span className="ml-[3px] flex-1 text-[17.300px] tracking-[-0.200px] text-[#9a9a9a]">Project status</span>
        <svg width="13" height="13" viewBox="0 0 13 13" stroke="#8c8c8c" strokeWidth="1.200"><path d="M.5.5l12 12M12.500.5l-12 12" /></svg>
      </div>
      <div className="flex min-h-0 flex-1 flex-col px-[16px] pt-[16px]">
        <div className="flex h-[252px] shrink-0 flex-col border border-[#c3c3c3] bg-white text-[17.300px] text-[#111]">
          <div className="flex h-[30px] items-center border-b border-[#c9c9c9] bg-linear-to-b from-[#fdfdfd] to-[#e9e9e9] pt-[4px] pl-[3px] tracking-[-0.200px]">Status</div>
          <div className="flex h-[26px] items-center pt-px pl-[9px]">
            <Twisty kind="d" />
            <span className="ml-[11px] tracking-[-0.050px]">Local Changes</span>
          </div>
          <div className="flex h-[26px] items-center pl-[65px]">
            <svg width="18" height="18" viewBox="0 0 18 18" fill="none" stroke="#000" strokeWidth="1.900" strokeLinejoin="round"><path d="M1 17l.8-5L12 1.800q1.800-1.300 3.300.3t.4 3.300L5.800 15.800zM10.500 3.500l4 4" /></svg>
            <span className="ml-[7px] tracking-[-0.130px]">Testiprojekti.qgz</span>
          </div>
        </div>
        <div className="flex h-[37px] shrink-0 items-center pt-[2px] text-[15.500px] tracking-[-0.030px] text-[#111]">Warnings</div>
        <div className="h-[253px] shrink-0 border border-[#c3c3c3] bg-white pl-[2px] text-black">
          <p className="flex h-[30px] items-center gap-[6px] text-[19.500px] font-bold whitespace-nowrap">
            <span className="tracking-[-0.170px]">Layer might not be available when offline.</span>
            <a className="tracking-[-0.060px] text-[#0000f5] underline">Read more.</a>
          </p>
          <p className="flex h-[27px] items-center pl-[13px] text-[15.500px]"><span className="mr-[4px] size-[7px] rounded-full bg-black" /><span className="tracking-[-0.050px]">Kapsi - taustakartta</span></p>
          <p className="flex h-[33px] items-center text-[19.500px] font-bold"><span className="tracking-[-0.200px]">luontoselvitys</span></p>
          <p className="flex h-[25px] items-center pl-[13px] text-[15.500px]"><span className="mr-[4px] size-[7px] rounded-full bg-black" /><span className="tracking-[-0.150px]">Field names contain line-break characters</span></p>
        </div>
        <div className="mt-[8px] flex h-[34px] items-center text-[16.200px] text-[#111]">
          <button className="flex h-[34px] w-[136px] items-center rounded-[2px] border border-[#b8b8b8] bg-linear-to-b from-[#fdfdfd] to-[#efefef] pl-[8px]">
            <svg width="16" height="20" viewBox="0 0 16 20" fill="none" stroke="#000" strokeWidth="2"><path d="M3 1h7l5 5v11q0 2-2 2H3q-2 0-2-2V3q0-2 2-2z" /><path d="M10 1v5h5" fill="#000" /><path d="M8 7v6M5 10h6M5 15h6" strokeWidth="1.700" /></svg>
            <span className="ml-[5px] tracking-[-0.370px] whitespace-nowrap">View Changes</span>
          </button>
          <div className="flex-1" />
          <button className="flex h-[34px] w-[70px] items-center rounded-[2px] border border-[#c8ab45] bg-linear-to-b from-[#ffdf73] to-[#f6cf4c] pl-[6px]">
            <Ico s={20}><SyncMark /></Ico>
            <span className="ml-[3px] tracking-[-0.300px]">Sync</span>
          </button>
          <button className="ml-[8px] flex h-[30px] w-[49px] items-center justify-center rounded-[2px] border border-[#b8b8b8] bg-linear-to-b from-[#fdfdfd] to-[#efefef] tracking-[-0.300px]">Sulje</button>
        </div>
      </div>
    </section>
  );
}

export default function App() {
  return (
    <div className="flex h-[985px] w-[1600px] flex-col overflow-hidden bg-[#efefef] font-['Open_Sans','Noto_Sans',sans-serif] leading-none">
      <Toolbars />
      <div className="flex min-h-0 flex-1">
        <Sidebar />
        <main className="relative min-w-0 flex-1 border-t border-l border-[#d0d0d0]">
          <MapCanvas />
          <Dialog />
        </main>
      </div>
    </div>
  );
}
